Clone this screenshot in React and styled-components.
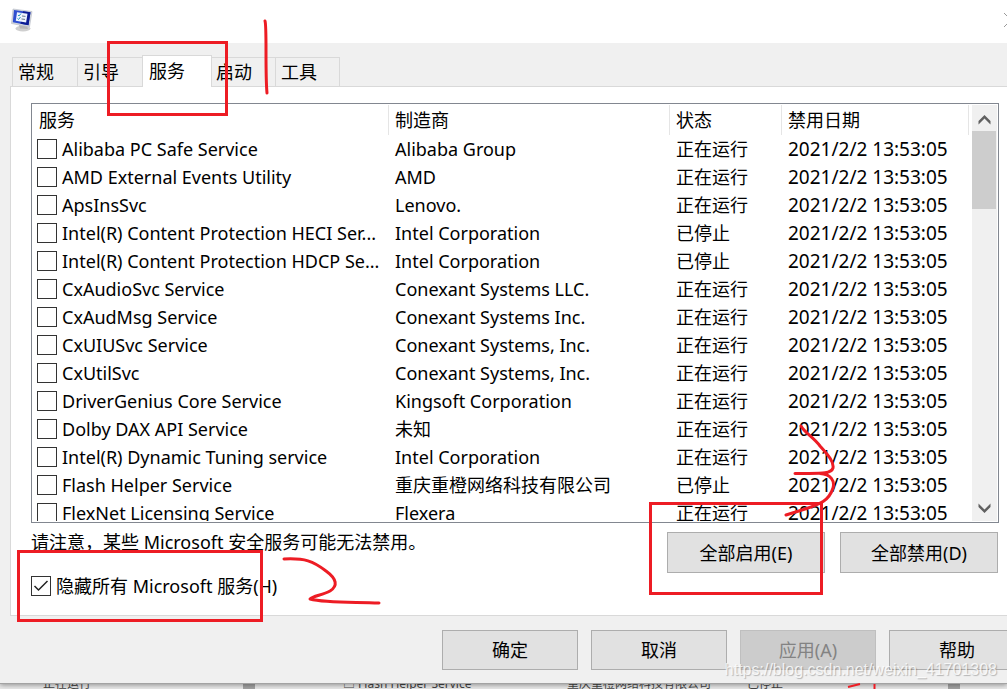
import React, { useState } from "react";
import styled, { createGlobalStyle } from "styled-components";

const GlobalStyle = createGlobalStyle`
  *{ box-sizing:border-box; }
  body{
    margin:0; background:#e9e9e9; color:#000; overflow:hidden;
    font-family:"Noto Sans","Noto Sans CJK SC",sans-serif; font-size:18px; line-height:24px;
  }
  button,input{ font:inherit; color:inherit; margin:0; }
`;

/* ===== 窗口 ===== */
const Page = styled.div` position:relative; overflow:hidden; `;
const Window = styled.div`
  position:relative; background:#f0f0f0; border-bottom:1px solid #a3a3a3;
  box-shadow:0 1px 5px rgba(0,0,0,.4);
`;
const TitleBar = styled.header`
  height:43px; background:#fff; display:flex; justify-content:space-between; padding:8px 0 0 10px;
`;
const CloseBtn = styled.button`
  width:16px; height:24px; margin-right:-12px; padding:0; border:0; background:none; flex:none;
  svg{ display:block; }
`;

/* ===== 选项卡 ===== */
const Tabs = styled.div` display:flex; align-items:flex-end; height:44px; padding-left:12px; `;
const Tab = styled.button`
  position:relative; z-index:${(p) => (p.$active ? 1 : 0)};
  width:${(p) => (p.$active ? 70 : 65)}px; height:${(p) => (p.$active ? 32 : 29)}px;
  margin:0 ${(p) => (p.$active ? "-2px" : "0")} ${(p) => (p.$active ? "0" : "1px")} 0;
  padding:0 0 1px ${(p) => (p.$active ? 6 : 5)}px;
  border:1px solid #d9d9d9; border-bottom:0; text-align:left; white-space:nowrap;
  border-right-width:${(p) => (p.$active || p.$last ? 1 : 0)}px;
  background:${(p) => (p.$active ? "#fff" : "#f0f0f0")};
`;
const Panel = styled.main`
  margin:-1px 0 0 10px; padding:16px 8px 17px 20px; background:#fff;
  border:1px solid #d9d9d9; border-right:0;
`;

/* ===== 服务列表 ===== */
const ListBox = styled.div`
  display:flex; gap:3px; height:420px; padding:1px; border:1px solid #828790; overflow:hidden;
`;
const TableArea = styled.div` flex:1; overflow:hidden; `;
const Table = styled.table`
  width:100%; table-layout:fixed; border-collapse:separate; border-spacing:0;
`;
const Th = styled.th`
  width:${(p) => p.$width}; height:30px; padding:0 0 0 6px; font-weight:400; text-align:left;
  border-right:1px solid #e5e5e5;
`;
const Td = styled.td`
  height:28px; padding:0 0 0 ${(p) => (p.$check ? 4 : 6)}px; white-space:nowrap; overflow:hidden;
  font-size:${(p) => (p.$date ? 19 : 18)}px;
`;
const CheckLabel = styled.label` display:flex; align-items:center; gap:5px; `;
const Check = styled.input.attrs({ type: "checkbox" })`
  appearance:none; position:relative; flex:none; width:20px; height:20px;
  border:1px solid #333; background:#fff;
`;
const CheckWrap = styled.span`
  position:relative; display:flex;
  svg{ position:absolute; left:0; top:0; pointer-events:none; }
`;
const ScrollBar = styled.div`
  width:25px; background:#f0f0f0; display:flex; flex-direction:column; flex:none;
`;
const ScrollBtn = styled.button`
  height:26px; padding:0; border:0; background:none; flex:none;
  svg{ display:block; margin:0 auto; }
`;
const Thumb = styled.div` width:24px; height:78px; background:#cdcdcd; `;
const Track = styled.div` flex:1; `;

/* ===== 底部 ===== */
const Below = styled.div` display:flex; justify-content:space-between; padding-top:7px; `;
const Notes = styled.div` display:flex; flex-direction:column; gap:20px; `;
const Note = styled.p` margin:0; `;
const Actions = styled.div` display:flex; gap:15px; padding:2px 1px 0 0; `;
const PushBtn = styled.button`
  width:${(p) => (p.$wide ? 158 : 136)}px; height:${(p) => (p.$wide ? 41 : 40)}px; flex:none;
  padding:0; border:1px solid #adadad; background:#e1e1e1;
  &:disabled{ background:#ccc; border-color:#bfbfbf; color:#838383; }
`;
const Footer = styled.footer`
  display:flex; justify-content:flex-end; gap:13px; padding:14px 0 13px; margin-right:-18px;
`;

/* ===== 后面的窗口 ===== */
const Behind = styled.div`
  display:grid; grid-template-columns:43px 200px 100px 224px 180px 201px 12px; height:5px; overflow:hidden;
  font-size:12px; line-height:12px; color:#444; background:#e9e9e9;
  span{ margin-top:-6px; white-space:nowrap; }
`;
const Block = styled.span` width:12px; height:12px; background:#a3a3a3; `;

/* ===== 标注和水印 ===== */
const Marks = styled.svg` position:absolute; left:0; top:0; pointer-events:none; `;
const Watermark = styled.div`
  position:absolute; right:10px; bottom:7px; font-family:"Liberation Sans",sans-serif; font-size:16px;
  color:rgba(255,255,255,.8); text-shadow:1px 1px 1px rgba(0,0,0,.25); pointer-events:none;
`;

const RUN = "正在运行";
const STOP = "已停止";
const DATE = "2021/2/2 13:53:05";
const services = [
  ["Alibaba PC Safe Service", "Alibaba Group", RUN],
  ["AMD External Events Utility", "AMD", RUN],
  ["ApsInsSvc", "Lenovo.", RUN],
  ["Intel(R) Content Protection HECI Ser...", "Intel Corporation", STOP],
  ["Intel(R) Content Protection HDCP Se...", "Intel Corporation", STOP],
  ["CxAudioSvc Service", "Conexant Systems LLC.", RUN],
  ["CxAudMsg Service", "Conexant Systems Inc.", RUN],
  ["CxUIUSvc Service", "Conexant Systems, Inc.", RUN],
  ["CxUtilSvc", "Conexant Systems, Inc.", RUN],
  ["DriverGenius Core Service", "Kingsoft Corporation", RUN],
  ["Dolby DAX API Service", "未知", RUN],
  ["Intel(R) Dynamic Tuning service", "Intel Corporation", RUN],
  ["Flash Helper Service", "重庆重橙网络科技有限公司", STOP],
  ["FlexNet Licensing Service", "Flexera", RUN],
];
const tabs = ["常规", "引导", "服务", "启动", "工具"];

function AppIcon() {
  return (
    <svg width="24" height="24" viewBox="0 0 24 24">
      <ellipse cx="13" cy="20.500" rx="7.500" ry="3" fill="#cfcfcf" />
      <path d="M9 17l8 1 1 3-8-.5z" fill="#b5b5b5" />
      <path d="M3 1l19 2.500-2.500 15.500L1.500 15.500z" fill="#d4d7dc" stroke="#b4b8c4" strokeWidth=".6" />
      <path d="M4 2l16.500 2.300-2 13L2.800 14.300z" fill="#2f4fd0" />
      <path d="M13 3.300l7.500 1-2 13-8-1.500z" fill="#0c1c93" />
      <path d="M7 4.300l10.500 1.400-1.400 8.800-10.300-1.800z" fill="#eef4ff" />
      <path d="M8 7l1 1 2-2.500M7.500 10.500l1 1 2-2.500" fill="none" stroke="#2a9ac0" />
      <path d="M12 8l3.500 .4M11.500 11l3.500 .4" stroke="#678" />
    </svg>
  );
}

function Arrow({ d }) {
  return (
    <svg width="25" height="26" viewBox="0 0 25 26">
      <path d={d} fill="#606060" />
    </svg>
  );
}

export default function App() {
  const [active, setActive] = useState("服务");
  const [hideMs, setHideMs] = useState(true);

  return (
    <Page>
      <GlobalStyle />
      <Window>
        <TitleBar>
          <AppIcon />
          <CloseBtn aria-label="关闭">
            <svg width="16" height="24" viewBox="0 0 16 24">
              <path d="M1 5l14 14M15 5L1 19" stroke="#999" />
            </svg>
          </CloseBtn>
        </TitleBar>

        <Tabs role="tablist">
          {tabs.map((t, i) => (
            <Tab
              key={t}
              role="tab"
              aria-selected={t === active}
              $active={t === active}
              $last={i === tabs.length - 1}
              onClick={() => setActive(t)}
            >
              {t}
            </Tab>
          ))}
        </Tabs>

        <Panel>
          <ListBox>
            <TableArea>
              <Table>
                <thead>
                  <tr>
                    <Th $width="auto">服务</Th>
                    <Th $width="281px">制造商</Th>
                    <Th $width="112px">状态</Th>
                    <Th $width="187px">禁用日期</Th>
                  </tr>
                </thead>
                <tbody>
                  {services.map(([name, maker, state]) => (
                    <tr key={name}>
                      <Td $check>
                        <CheckLabel>
                          <Check />
                          {name}
                        </CheckLabel>
                      </Td>
                      <Td>{maker}</Td>
                      <Td>{state}</Td>
                      <Td $date>{DATE}</Td>
                    </tr>
                  ))}
                </tbody>
              </Table>
            </TableArea>
            <ScrollBar>
              <ScrollBtn aria-label="向上">
                <Arrow d="M12.500 10L18.500 16v3.500l-6-6-6 6V16z" />
              </ScrollBtn>
              <Thumb />
              <Track />
              <ScrollBtn aria-label="向下">
                <Arrow d="M12.500 18L18.500 12V8.500l-6 6-6-6V12z" />
              </ScrollBtn>
            </ScrollBar>
          </ListBox>

          <Below>
            <Notes>
              <Note>请注意，某些 Microsoft 安全服务可能无法禁用。</Note>
              <CheckLabel>
                <CheckWrap>
                  <Check checked={hideMs} onChange={(e) => setHideMs(e.target.checked)} />
                  {hideMs && (
                    <svg width="20" height="20" viewBox="0 0 20 20">
                      <path d="M3.500 10l4 4L16.500 5" fill="none" stroke="#222" strokeWidth="1.500" />
                    </svg>
                  )}
                </CheckWrap>
                隐藏所有 Microsoft 服务(H)
              </CheckLabel>
            </Notes>
            <Actions>
              <PushBtn $wide>全部启用(E)</PushBtn>
              <PushBtn $wide>全部禁用(D)</PushBtn>
            </Actions>
          </Below>
        </Panel>

        <Footer>
          <PushBtn>确定</PushBtn>
          <PushBtn>取消</PushBtn>
          <PushBtn disabled>应用(A)</PushBtn>
          <PushBtn>帮助</PushBtn>
        </Footer>
      </Window>

      <Behind aria-hidden="true">
        <i />
        <span>正在运行</span>
        <Block />
        <span>□ Flash Helper Service</span>
        <span>重庆重橙网络科技有限公司</span>
        <span>已停止</span>
        <Block />
      </Behind>

      <Marks width="1007" height="689" viewBox="0 0 1007 689" fill="none" stroke="#ed1c24" strokeWidth="3">
        <rect x="108.500" y="42.500" width="118" height="72" />
        <rect x="18.500" y="551.500" width="243" height="69" />
        <rect x="650.500" y="503.500" width="171" height="90" />
        <g strokeLinecap="round" strokeLinejoin="round">
          <path d="M265 21C267 26 265 72 267 93" />
          <path d="M284 559C305 558 313 561 326 571C337 579 338 586 330 591C323 595 313 596 310 599C325 603 350 602 379 603" />
          <path d="M801 426C805 433 813 437 820 446C829 456 834 462 833 468C831 475 816 473 795 473.500M820 473.500C831 474 835 481 833 488C829 501 820 504 805 509L786 515" />
        </g>
        <path d="M848 687L860 684M874.500 684V689" strokeWidth="2" />
      </Marks>
      <Watermark>https://blog.csdn.net/weixin_41701308</Watermark>
    </Page>
  );
}
